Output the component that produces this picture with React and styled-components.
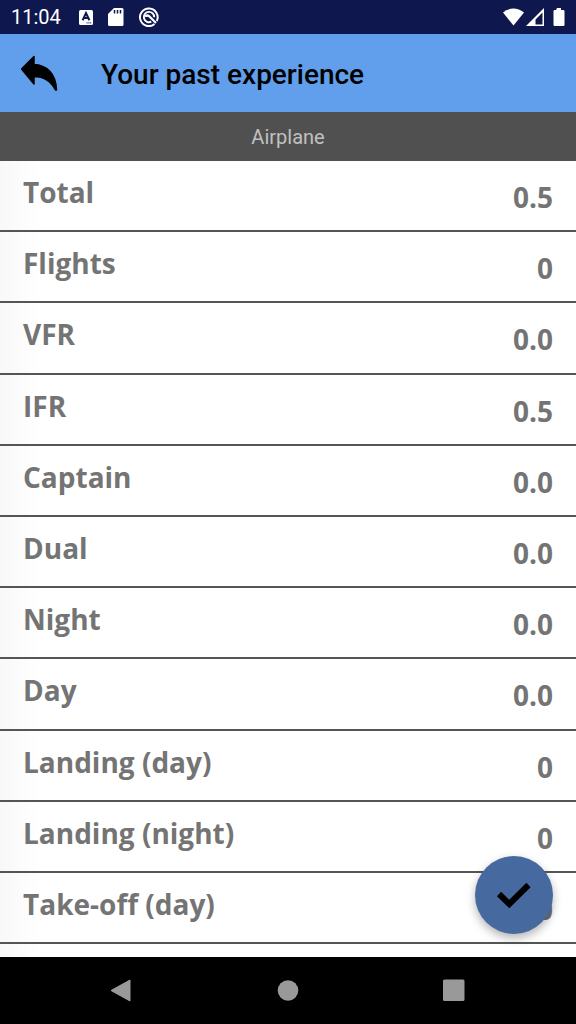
import React from "react";
import styled, { createGlobalStyle } from "styled-components";

const entries = [
  { label: "Total", value: "0.5" },
  { label: "Flights", value: "0" },
  { label: "VFR", value: "0.0" },
  { label: "IFR", value: "0.5" },
  { label: "Captain", value: "0.0" },
  { label: "Dual", value: "0.0" },
  { label: "Night", value: "0.0" },
  { label: "Day", value: "0.0" },
  { label: "Landing (day)", value: "0" },
  { label: "Landing (night)", value: "0" },
  { label: "Take-off (day)", value: "0" },
];

const StatusBar = () => (
  <StyledStatus>
    <time>11:04</time>
    <StatusIcons>
      <svg width="14" height="16" viewBox="0 0 14 16">
        <rect x="0" y="1" width="14" height="15" rx="1.5" fill="#fff" />
        <path
          d="M3.6 11.2 7 4 10.400 11.200M4.900 9h4.200"
          fill="none"
          stroke="#0e184f"
          strokeWidth="2"
        />
        <path d="M7.500 13.900h5" stroke="#0e184f" strokeDasharray="1.2 .6" />
      </svg>
      <svg width="16" height="18" viewBox="0 0 16 18">
        <path
          d="M6 0h8Q15.500 0 15.500 1.500v15Q15.500 18 14 18H1.500Q0 18 0 16.500V6z"
          fill="#fff"
        />
        <path
          d="M6.500 2v3.500M9.500 2v3.500M12.500 2v3.500"
          stroke="#0e184f"
          strokeWidth="1.5"
        />
      </svg>
      <svg width="20" height="20" viewBox="0 0 20 20" fill="none" stroke="#fff">
        <path d="M15.500 17A8.800 8.800 0 1 1 17.800 14" strokeWidth="2" />
        <path d="M12.300 14.700A5.200 5.200 0 1 1 15.200 10.300" strokeWidth="1.9" />
        <path d="M6 9.500Q8.500 7.500 10.500 9.500L17 16" strokeWidth="2.2" />
      </svg>
    </StatusIcons>
    <svg width="62" height="18" viewBox="0 0 62 18" fill="#fff">
      <path d="M0 4.500Q10.500-3.500 21 4.500L10.500 17.500z" />
      <path
        fillRule="evenodd"
        d="M41 0v18H23zM39.500 4.500 32.500 11.500V16.500H39.500z"
      />
      <path d="M54 0h4v2h2q1.500 0 1.500 1v14q0 1-1 1h-9q-1 0-1-1V3q0-1 1.500-1h1z" />
    </svg>
  </StyledStatus>
);

const App = () => {
  return (
    <>
      <GlobalStyle />
      <Screen>
        <StatusBar />
        <Header>
          <BackButton type="button" aria-label="Back">
            <svg width="38" height="38" viewBox="0 0 38 38">
              <path
                d="M.5 14 13 1.500V9.500C25 10 35 18 35.500 35H34.500C29.500 25.500 22.500 21.500 13 21.500V29z"
                fill="#000"
                stroke="#000"
                strokeWidth="1.500"
                strokeLinejoin="round"
              />
            </svg>
          </BackButton>
          <h1>Your past experience</h1>
        </Header>
        <SectionTitle>Airplane</SectionTitle>
        <List>
          {entries.map(({ label, value }) => (
            <Row key={label}>
              <dt>{label}</dt>
              <dd>{value}</dd>
            </Row>
          ))}
        </List>
        <Footer>
          <SaveButton type="button" aria-label="Save">
            <svg width="36" height="28" viewBox="0 0 36 28">
              <path
                d="M3 13 13.300 23 32.500 4"
                fill="none"
                stroke="#000"
                strokeWidth="6"
              />
            </svg>
          </SaveButton>
          <NavButton type="button" aria-label="Back">
            <svg width="24" height="24" viewBox="0 0 24 24">
              <path d="M1 11.500 20 1v21z" stroke="#999" strokeLinejoin="round" />
            </svg>
          </NavButton>
          <NavButton type="button" aria-label="Home">
            <svg width="24" height="24" viewBox="0 0 24 24">
              <circle cx="12" cy="11.500" r="10.300" />
            </svg>
          </NavButton>
          <NavButton type="button" aria-label="Recent apps">
            <svg width="24" height="24" viewBox="0 0 24 24">
              <rect x="1" y="0.500" width="21.500" height="21.500" rx="1.500" />
            </svg>
          </NavButton>
        </Footer>
      </Screen>
    </>
  );
};

const GlobalStyle = createGlobalStyle`
  * {
    box-sizing: border-box;
    margin: 0;
    padding: 0;
  }

  body {
    background: #fff;
    font-family: Roboto, sans-serif;
  }

  button {
    border: none;
    background: none;
    cursor: pointer;
  }

  svg {
    display: block;
  }
`;

const Screen = styled.div`
  display: flex;
  flex-direction: column;
  min-height: 100vh;
`;

const StyledStatus = styled.div`
  display: flex;
  align-items: center;
  height: 34px;
  padding: 0 11px;
  background: #0e184f;
  color: #fff;
  font-size: 20px;

  > svg {
    margin-left: auto;
  }
`;

const StatusIcons = styled.div`
  display: flex;
  align-items: center;
  gap: 15px;
  margin-left: 18px;
`;

const Header = styled.header`
  display: flex;
  align-items: center;
  gap: 40px;
  height: 78px;
  padding: 2px 21px 0;
  background: #619eeb;

  h1 {
    color: #000;
    font-size: 28px;
    font-weight: 500;
  }
`;

const BackButton = styled.button`
  width: 40px;
  height: 40px;
`;

const SectionTitle = styled.h2`
  padding: 13px 12px 11px;
  background: #505050;
  color: #c0c0c0;
  font-size: 20px;
  font-weight: 400;
  line-height: 25px;
  text-align: center;
`;

const List = styled.dl`
  display: flex;
  flex: 1;
  flex-direction: column;
  padding-bottom: 13px;
  background: linear-gradient(to right, #f8f8f8, #fff 40px);
`;

const Row = styled.div`
  display: flex;
  flex: 1;
  justify-content: space-between;
  padding: 12px 23px;
  border-bottom: 2px solid #555;
  color: #747474;
  font-family: "Open Sans", sans-serif;
  font-size: 28px;
  font-weight: 700;
  line-height: 38px;

  dd {
    padding-top: 5px;
  }
`;

const Footer = styled.footer`
  position: sticky;
  bottom: 0;
  display: flex;
  align-items: center;
  justify-content: center;
  gap: 118px;
  height: 67px;
  background: #000;
`;

const NavButton = styled.button`
  padding: 12px;
  fill: #999;
`;

/* floats over the end of the list */
const SaveButton = styled.button`
  position: absolute;
  right: 23px;
  bottom: 90px;
  display: flex;
  align-items: center;
  justify-content: center;
  width: 78px;
  height: 78px;
  border-radius: 50%;
  background: #466a9f;
  box-shadow: 0 4px 10px rgba(0, 0, 0, 0.3);
`;

export default App;
